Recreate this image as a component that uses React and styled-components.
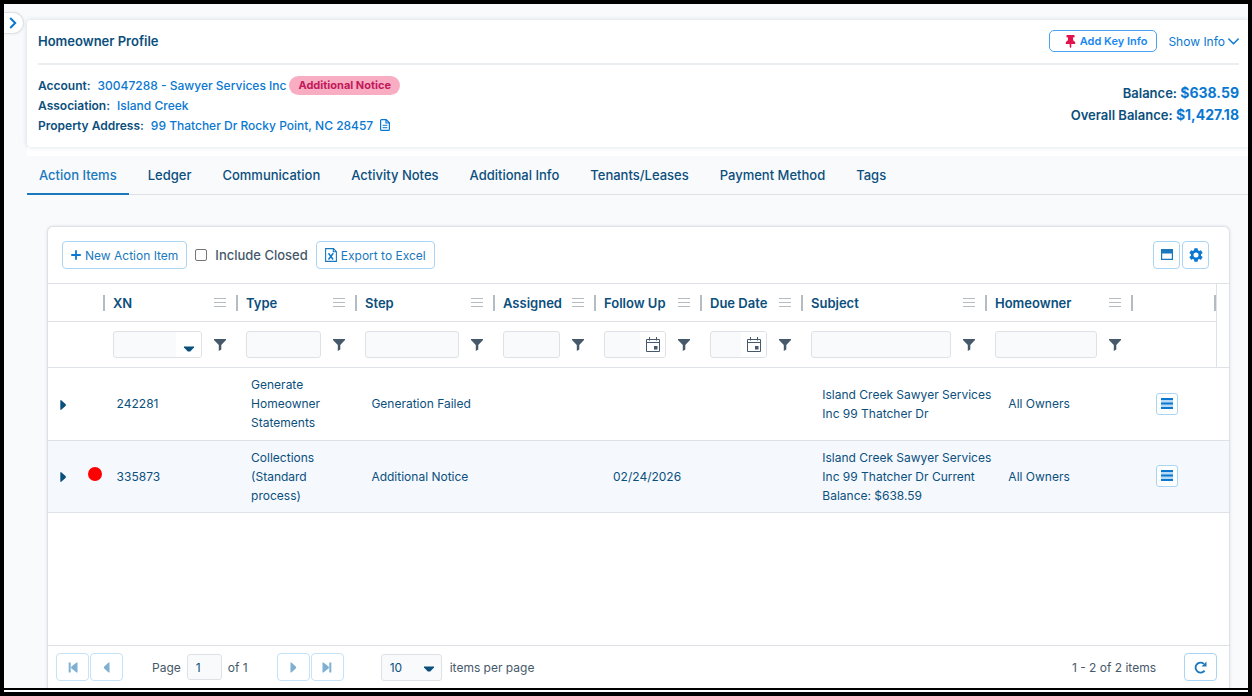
import React from "react"
import styled, { createGlobalStyle, css } from "styled-components"
import { FaThumbtack } from "react-icons/fa"

const colors = {
  navy: "#0b4f7d",
  blue: "#0a78d1",
  linkBlue: "#1a78bd",
  slate: "#45596a",
  border: "#dee2e6",
  softBlue: "#a9d5f5",
  page: "#f8fafc",
}

const GlobalStyle = createGlobalStyle`
  * {
    box-sizing: border-box;
  }
  body {
    margin: 0;
    font-family: Inter, "Liberation Sans", sans-serif;
    font-size: 13px;
    color: ${colors.navy};
  }
  button, input, select {
    font: inherit;
    color: inherit;
    margin: 0;
  }
  svg {
    display: block;
    flex: none;
  }
`

const Frame = styled.div`
  display: flex;
  flex-direction: column;
  min-height: 100vh;
  border: 4px solid #000;
  background: #fff;
`
const Page = styled.div`
  position: relative;
  display: flex;
  flex-direction: column;
  flex: 1;
  margin-bottom: 2px;
  padding: 16px 0 0 23px;
  border-bottom: 2px solid #000;
  background: ${colors.page};
`
const ExpandButton = styled.button`
  position: absolute;
  top: 8px;
  left: 0;
  display: flex;
  align-items: center;
  justify-content: center;
  width: 20px;
  height: 22px;
  padding: 0 2px 0 0;
  border: 1px solid ${colors.border};
  border-left: none;
  border-radius: 0 11px 11px 0;
  background: #fff;
  color: ${colors.blue};
  box-shadow: 0 0 3px rgba(0, 0, 0, 0.08);
`

const ProfileCard = styled.section`
  position: relative;
  padding: 0 9px 0 11px;
  border-radius: 4px 0 0 4px;
  background: #fff;
  box-shadow: 0 0 5px rgba(20, 60, 90, 0.16);
`
const ProfileHead = styled.header`
  display: flex;
  align-items: center;
  justify-content: space-between;
  height: 45px;
  padding-bottom: 1px;
  border-bottom: 2px solid #ebeef0;
`
const ProfileTitle = styled.h1`
  margin: 0;
  font-size: 13px;
  font-weight: 600;
`
const HeadActions = styled.div`
  display: flex;
  align-items: center;
  gap: 11px;
`
const KeyInfoButton = styled.button`
  display: flex;
  align-items: center;
  gap: 3px;
  height: 22px;
  padding: 0 9px 0 14px;
  border: 1px solid #4aa3f0;
  border-radius: 5px;
  background: #fff;
  color: #1a87f0;
  font-size: 11px;
  font-weight: 600;

  svg {
    color: #e0114b;
  }
`
const ShowInfo = styled.button`
  display: flex;
  align-items: center;
  gap: 3px;
  padding: 0;
  border: none;
  background: transparent;
  color: ${colors.blue};
  font-size: 12px;
`
const ProfileBody = styled.div`
  display: flex;
  align-items: flex-start;
  justify-content: space-between;
  padding: 10px 0 12px;
`
const Details = styled.dl`
  margin: 0;
`
const Detail = styled.div`
  display: flex;
  align-items: center;
  height: 20px;
  font-size: 12px;
  font-weight: 500;

  dt {
    margin-right: 7px;
    font-weight: 600;
  }
  dd {
    display: flex;
    align-items: center;
    gap: 3px;
    margin: 0;
  }
`
const DetailLink = styled.a`
  color: ${colors.blue};
  text-decoration: none;
`
const NoticeBadge = styled.span`
  padding: 0 9px;
  border-radius: 10px;
  background: #f8adc2;
  color: #c2185b;
  font-size: 11px;
  font-weight: 700;
  line-height: 19px;
`
const DocLink = styled.a`
  margin-left: 4px;
  color: ${colors.blue};
`
const Balances = styled.div`
  padding-top: 7px;
  text-align: right;
  font-weight: 600;
  line-height: 22px;

  strong {
    color: ${colors.blue};
    font-size: 14px;
    font-weight: 700;
  }
`

const Tabs = styled.nav`
  display: flex;
  margin-top: 8px;
  border-top: 1px solid #fff;
  border-bottom: 1px solid ${colors.border};
  box-shadow: 0 -8px 0 #fff;
`
const Tab = styled.a`
  margin-bottom: -1px;
  padding: 11px 12px 10px;
  border-bottom: 2px solid transparent;
  font-weight: 500;
  line-height: 16px;
  text-decoration: none;
  color: ${colors.navy};
  margin-right: 7px;

  ${props => props.$active && css`
    color: ${colors.linkBlue};
    border-bottom-color: ${colors.linkBlue};
  `}
`

const GridPanel = styled.section`
  display: flex;
  flex-direction: column;
  flex: 1;
  margin: 31px 18px 0 20px;
  border: 1px solid ${colors.border};
  border-bottom: none;
  border-radius: 6px 6px 0 0;
  background: #fff;
  box-shadow: 0 0 3px rgba(20, 60, 90, 0.12);
`
const Toolbar = styled.div`
  display: flex;
  align-items: center;
  gap: 8px;
  height: 57px;
  padding: 0 20px 0 14px;
  border-bottom: 1px solid ${colors.border};
`
const ToolButton = styled.button`
  display: flex;
  align-items: center;
  justify-content: center;
  gap: 4px;
  min-width: 27px;
  height: 28px;
  padding: 0 ${props => props.$icon ? 0 : 8}px;
  border: 1px solid ${colors.softBlue};
  border-radius: 4px;
  background: #fff;
  color: ${colors.linkBlue};
  font-size: 12px;
`
const ClosedLabel = styled.label`
  display: flex;
  align-items: center;
  gap: 8px;
  color: ${colors.slate};
  font-weight: 500;

  input {
    width: 12px;
    height: 12px;
    appearance: none;
    border: 1px solid #767676;
    border-radius: 2px;
    background: #fff;
  }
`
const ToolIcons = styled.div`
  display: flex;
  gap: 2px;
  margin-left: auto;
`

const HeadScroll = styled.div`
  padding-right: 13px;
  border-bottom: 1px solid ${colors.border};
`
const GridTable = styled.table`
  width: 100%;
  table-layout: fixed;
  border-collapse: collapse;
`
const HeadTable = styled(GridTable)`
  border-right: 1px solid ${colors.border};
`
const HeadRow = styled.tr`
  height: 37px;
  border-bottom: 1px solid ${colors.border};
`
const HeadCell = styled.th`
  padding: 1px 0 0;
  text-align: left;
  font-weight: 600;
  white-space: nowrap;
`
const HeadInner = styled.div`
  display: flex;
  align-items: center;
  height: 16px;
  padding-left: 8px;
  border-right: ${props => props.$handle ? "2px solid #b4bbc1" : "none"};

  span {
    flex: 1;
  }
`
const MenuButton = styled.button`
  margin-right: 10px;
  padding: 0;
  border: none;
  background: transparent;
  color: #b4bbc1;
`
const FilterRow = styled.tr`
  height: 46px;
`
const FilterCell = styled.td`
  padding: 0;
`
const FilterInner = styled.div`
  display: flex;
  align-items: center;
  gap: 12px;
  padding: 0 12px 0 8px;
`
const FieldBox = styled.div`
  position: relative;
  display: flex;
  flex: 1;
  min-width: 0;
  height: 27px;
  overflow: hidden;
  border: 1px solid ${colors.border};
  border-radius: 3px;
  background: ${colors.page};

  input, select {
    flex: 1;
    width: 100%;
    min-width: 0;
    padding: 0 8px;
    border: none;
    background: transparent;
    appearance: none;
  }
`
const FieldButton = styled.button`
  display: flex;
  align-items: center;
  justify-content: center;
  width: 25px;
  padding: ${props => props.$low ? "9px 0 0" : "0"};
  border: none;
  background: #fff;
  color: ${props => props.$low ? colors.navy : colors.slate};
`
const PlainIconButton = styled.button`
  padding: 1px 0 0;
  border: none;
  background: transparent;
  color: ${colors.slate};
`

const GridBody = styled.div`
  flex: 1;
`
const BodyRow = styled.tr`
  height: 72px;
  border-bottom: 1px solid ${colors.border};
  background: ${props => props.$alt ? "#f5f9fe" : "#fff"};
`
const BodyCell = styled.td`
  padding: ${props => props.$flush ? "7px 0" : "7px 11px"};
  font-size: 12px;
  line-height: 19px;
  vertical-align: middle;
`
const SubjectCell = styled(BodyCell)`
  padding-right: 0;
`
const ToggleButton = styled.button`
  display: block;
  margin-left: 12px;
  padding: 2px 0 0;
  border: none;
  background: transparent;
`
const StatusDot = styled.span`
  display: block;
  width: 14px;
  height: 14px;
  margin: 0 0 5px 8px;
  border-radius: 50%;
  background: #f00;
`
const RowMenuButton = styled.button`
  display: flex;
  align-items: center;
  justify-content: center;
  width: 22px;
  height: 22px;
  padding: 0;
  border: 1px solid ${colors.softBlue};
  border-radius: 3px;
  background: #fff;
  color: ${colors.blue};
`

const Pager = styled.footer`
  display: flex;
  align-items: center;
  height: 43px;
  padding: 0 12px 0 8px;
  border-top: 1px solid ${colors.border};
  color: ${colors.slate};
  font-size: 12px;
`
const PagerGroup = styled.div`
  display: flex;
  gap: 1px;
`
const PagerButton = styled(ToolButton)`
  width: 33px;
  padding: 0;
  color: ${props => props.disabled ? "#7fb0d2" : colors.linkBlue};
  border-color: ${props => props.disabled ? "#c6e2f7" : colors.softBlue};
`
const PageLabel = styled.label`
  display: flex;
  align-items: center;
  gap: 6px;
  margin: 0 29px;

  input {
    width: 35px;
    height: 26px;
    padding: 0 8px;
    border: 1px solid ${colors.border};
    border-radius: 3px;
    background: ${colors.page};
    color: ${colors.navy};
  }
`
const SizeLabel = styled.label`
  display: flex;
  align-items: center;
  gap: 8px;
  margin-left: 37px;
`
const SizeBox = styled(FieldBox)`
  flex: none;
  width: 61px;
  color: ${colors.navy};

  svg {
    position: absolute;
    top: 11px;
    right: 7px;
    pointer-events: none;
  }
`
const PagerInfo = styled.span`
  margin-left: auto;
  margin-right: 28px;
`

const MenuLines = () => (
  <svg width="12" height="9" viewBox="0 0 12 9">
    <path d="M0 .5h12M0 4.5h12M0 8.5h12" stroke="currentColor" />
  </svg>
)
const Funnel = () => (
  <svg width="12" height="12" viewBox="0 0 12 12">
    <path d="M0 0h12v1L7.3 6v4.6L4.8 12V6L0 1z" fill="currentColor" />
  </svg>
)
const CaretDown = () => (
  <svg width="10" height="6" viewBox="0 0 10 6">
    <path d="M0 .6h10v.9L6.2 5.6H3.8L0 1.5z" fill="currentColor" />
  </svg>
)
const CaretRight = () => (
  <svg width="6" height="10" viewBox="0 0 6 10">
    <path d="M.3.3h1L5.8 4.2v1.6L1.3 9.7h-1z" fill="currentColor" />
  </svg>
)
const Calendar = () => (
  <svg width="14" height="15" viewBox="0 0 14 15" fill="none" stroke="currentColor">
    <path d="M.5 2.5h13v12H.5zM.5 5.5h13M3.5 0v3.5M10.5 0v3.5" />
    <path d="M8 9h3.5v3.5H8z" fill="currentColor" stroke="none" />
  </svg>
)
const ChevronRight = () => (
  <svg width="8" height="12" viewBox="0 0 8 12" fill="none">
    <path d="M1.2 1l5 5-5 5" stroke="currentColor" strokeWidth="2" />
  </svg>
)
const ChevronDown = () => (
  <svg width="11" height="7" viewBox="0 0 11 7" fill="none">
    <path d="M.8 1l4.7 4.7L10.2 1" stroke="currentColor" strokeWidth="1.5" strokeLinecap="round" />
  </svg>
)
const DocIcon = () => (
  <svg width="10" height="12" viewBox="0 0 10 12" fill="none" stroke="currentColor">
    <path d="M1.5.6h4.7L9.4 3.7v6.8q0 .9-.9.9h-7q-.9 0-.9-.9v-9q0-.9.9-.9zM6 .8V4h3.2" strokeWidth="1.2" />
    <path d="M2.6 6.3h4.8M2.6 8.7h4.8" />
  </svg>
)
const PlusIcon = () => (
  <svg width="10" height="10" viewBox="0 0 10 10">
    <path d="M5 .2v9.6M.2 5h9.6" stroke={colors.blue} strokeWidth="1.8" />
  </svg>
)
const ExcelIcon = () => (
  <svg width="12" height="14" viewBox="0 0 12 14" fill="none" stroke="currentColor">
    <path d="M.6.6h7.9l2.9 3v9.8H.6zM8.3.8v3h3" strokeWidth="1.1" />
    <path d="M3.5 5.2l4.6 6.3M8.3 5.2l-4.8 6.3" stroke={colors.blue} strokeWidth="1.5" />
  </svg>
)
const WindowIcon = () => (
  <svg width="12" height="12" viewBox="0 0 12 12">
    <path d="M.6.6h10.8v9.8H.6z" fill="none" stroke="currentColor" strokeWidth="1.2" />
    <path d="M0 0h12v4.5H0z" fill="currentColor" />
  </svg>
)
const GearIcon = () => (
  <svg width="14" height="14" viewBox="2 2 20 20">
    <path
      fill={colors.blue}
      d="M19.14 12.94c.04-.3.06-.61.06-.94s-.02-.64-.07-.94l2.03-1.58a.49.49 0 0 0 .12-.61l-1.92-3.32a.49.49 0 0 0-.59-.22l-2.39.96a7 7 0 0 0-1.62-.94l-.36-2.54A.48.48 0 0 0 13.92 2.4h-3.84c-.24 0-.43.17-.47.41l-.36 2.54c-.59.24-1.13.57-1.62.94l-2.39-.96a.48.48 0 0 0-.59.22L2.74 8.87a.47.47 0 0 0 .12.61l2.03 1.58c-.05.3-.09.63-.09.94s.02.64.07.94l-2.03 1.58a.49.49 0 0 0-.12.61l1.92 3.32c.12.22.37.29.59.22l2.39-.96c.5.38 1.03.7 1.62.94l.36 2.54c.05.24.24.41.48.41h3.84c.24 0 .44-.17.47-.41l.36-2.54a6.8 6.8 0 0 0 1.62-.94l2.39.96c.22.08.47 0 .59-.22l1.92-3.32a.47.47 0 0 0-.12-.61zM12 15.6a3.6 3.6 0 1 1 0-7.2 3.6 3.6 0 0 1 0 7.2z"
    />
  </svg>
)
const RowMenuIcon = () => (
  <svg width="12" height="12" viewBox="0 0 12 12">
    <path d="M0 1h12v9H0z" fill="#b9daf4" />
    <path d="M0 1h12M0 5.5h12M0 10h12" stroke="currentColor" strokeWidth="2.2" />
  </svg>
)
const StepIcon = ({ flip, bar }) => (
  <svg width="10" height="11" viewBox="0 0 10 11">
    <g transform={flip ? "translate(10 0) scale(-1 1)" : undefined} fill="currentColor">
      <path d={bar ? "M9.5.5v10h-1L3.2 6.2V4.8L8.5.5z" : "M7.5.5v10h-1L2 6.2V4.8L6.5.5z"} />
      {bar && <path d="M.7.5h2v10h-2z" />}
    </g>
  </svg>
)
const RefreshIcon = () => (
  <svg width="13" height="13" viewBox="0 0 13 13">
    <path d="M10.6 9.6A5 5 0 1 1 9.9 2.9" fill="none" stroke="currentColor" strokeWidth="1.8" />
    <path d="M12.5.6v5H7.5z" fill="currentColor" />
  </svg>
)

const columns = [
  { width: 32 },
  { width: 25, handle: true },
  { title: "XN", width: 133, filter: "select" },
  { title: "Type", width: 119, filter: "text" },
  { title: "Step", width: 138, filter: "text" },
  { title: "Assigned", width: 101, filter: "text" },
  { title: "Follow Up", width: 106, filter: "date" },
  { title: "Due Date", width: 101, filter: "date" },
  { title: "Subject", width: 184, filter: "text" },
  { title: "Homeowner", width: 146, filter: "text" },
  { width: 83, handle: true },
]

const rows = [
  {
    xn: "242281",
    type: "Generate Homeowner Statements",
    step: "Generation Failed",
    subject: "Island Creek Sawyer Services Inc 99 Thatcher Dr",
    homeowner: "All Owners",
  },
  {
    flagged: true,
    xn: "335873",
    type: "Collections (Standard process)",
    step: "Additional Notice",
    followUp: "02/24/2026",
    subject: "Island Creek Sawyer Services Inc 99 Thatcher Dr Current Balance: $638.59",
    homeowner: "All Owners",
  },
]

const tabs = [
  "Action Items",
  "Ledger",
  "Communication",
  "Activity Notes",
  "Additional Info",
  "Tenants/Leases",
  "Payment Method",
  "Tags",
]

function ColGroup() {
  return <colgroup>
    {columns.map((c, i) => <col key={i} style={{ width: c.width }} />)}
  </colgroup>
}

function Filter({ column }) {
  const label = `${column.title} filter`
  return <FilterInner>
    <FieldBox>
      {column.filter === "select"
        ? <select aria-label={label}><option></option></select>
        : <input type="text" aria-label={label} />}
      {column.filter === "select" && <FieldButton $low aria-label="Open list"><CaretDown /></FieldButton>}
      {column.filter === "date" && <FieldButton aria-label="Open calendar"><Calendar /></FieldButton>}
    </FieldBox>
    <PlainIconButton aria-label={`${column.title} filter options`}><Funnel /></PlainIconButton>
  </FilterInner>
}

function Profile() {
  return <ProfileCard>
    <ProfileHead>
      <ProfileTitle>Homeowner Profile</ProfileTitle>
      <HeadActions>
        <KeyInfoButton><FaThumbtack size={13} />Add Key Info</KeyInfoButton>
        <ShowInfo>Show Info<ChevronDown /></ShowInfo>
      </HeadActions>
    </ProfileHead>
    <ProfileBody>
      <Details>
        <Detail>
          <dt>Account:</dt>
          <dd>
            <DetailLink href="#account">30047288 - Sawyer Services Inc</DetailLink>
            <NoticeBadge>Additional Notice</NoticeBadge>
          </dd>
        </Detail>
        <Detail>
          <dt>Association:</dt>
          <dd><DetailLink href="#association">Island Creek</DetailLink></dd>
        </Detail>
        <Detail>
          <dt>Property Address:</dt>
          <dd>
            <DetailLink href="#address">99 Thatcher Dr Rocky Point, NC 28457</DetailLink>
            <DocLink href="#document" aria-label="Document"><DocIcon /></DocLink>
          </dd>
        </Detail>
      </Details>
      <Balances>
        <div>Balance: <strong>$638.59</strong></div>
        <div>Overall Balance: <strong>$1,427.18</strong></div>
      </Balances>
    </ProfileBody>
  </ProfileCard>
}

function ActionGrid() {
  return <GridPanel>
    <Toolbar>
      <ToolButton><PlusIcon />New Action Item</ToolButton>
      <ClosedLabel><input type="checkbox" />Include Closed</ClosedLabel>
      <ToolButton><ExcelIcon />Export to Excel</ToolButton>
      <ToolIcons>
        <ToolButton $icon aria-label="Layout"><WindowIcon /></ToolButton>
        <ToolButton $icon aria-label="Settings"><GearIcon /></ToolButton>
      </ToolIcons>
    </Toolbar>
    <HeadScroll>
      <HeadTable>
        <ColGroup />
        <thead>
          <HeadRow>
            {columns.map((c, i) => <HeadCell key={i} scope="col">
              <HeadInner $handle={c.title || c.handle}>
                <span>{c.title}</span>
                {c.title && <MenuButton aria-label={`${c.title} menu`}><MenuLines /></MenuButton>}
              </HeadInner>
            </HeadCell>)}
          </HeadRow>
          <FilterRow>
            {columns.map((c, i) => <FilterCell key={i}>
              {c.filter && <Filter column={c} />}
            </FilterCell>)}
          </FilterRow>
        </thead>
      </HeadTable>
    </HeadScroll>
    <GridBody>
      <GridTable>
        <ColGroup />
        <tbody>
          {rows.map((row, i) => <BodyRow key={row.xn} $alt={i % 2 === 1}>
            <BodyCell $flush><ToggleButton aria-label="Expand row"><CaretRight /></ToggleButton></BodyCell>
            <BodyCell $flush>{row.flagged && <StatusDot />}</BodyCell>
            <BodyCell>{row.xn}</BodyCell>
            <BodyCell>{row.type}</BodyCell>
            <BodyCell>{row.step}</BodyCell>
            <BodyCell />
            <BodyCell>{row.followUp}</BodyCell>
            <BodyCell />
            <SubjectCell>{row.subject}</SubjectCell>
            <BodyCell>{row.homeowner}</BodyCell>
            <BodyCell><RowMenuButton aria-label="Row actions"><RowMenuIcon /></RowMenuButton></BodyCell>
          </BodyRow>)}
        </tbody>
      </GridTable>
    </GridBody>
    <Pager>
      <PagerGroup>
        <PagerButton disabled aria-label="First page"><StepIcon bar /></PagerButton>
        <PagerButton disabled aria-label="Previous page"><StepIcon /></PagerButton>
      </PagerGroup>
      <PageLabel>Page<input type="text" defaultValue="1" />of 1</PageLabel>
      <PagerGroup>
        <PagerButton disabled aria-label="Next page"><StepIcon flip /></PagerButton>
        <PagerButton disabled aria-label="Last page"><StepIcon flip bar /></PagerButton>
      </PagerGroup>
      <SizeLabel>
        <SizeBox>
          <select defaultValue="10">
            <option>10</option>
            <option>20</option>
            <option>50</option>
          </select>
          <CaretDown />
        </SizeBox>
        items per page
      </SizeLabel>
      <PagerInfo>1 - 2 of 2 items</PagerInfo>
      <PagerButton aria-label="Refresh"><RefreshIcon /></PagerButton>
    </Pager>
  </GridPanel>
}

export default function App() {
  return <Frame>
    <GlobalStyle />
    <Page>
      <ExpandButton aria-label="Expand menu"><ChevronRight /></ExpandButton>
      <Profile />
      <Tabs>
        {tabs.map((tab, i) => <Tab key={tab} href="#tab" $active={i === 0}>{tab}</Tab>)}
      </Tabs>
      <ActionGrid />
    </Page>
  </Frame>
}
